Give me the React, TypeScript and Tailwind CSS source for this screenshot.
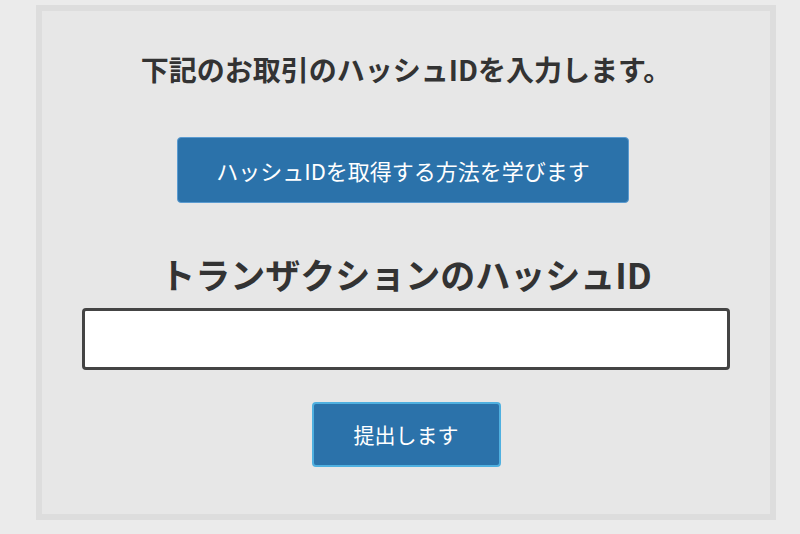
import React from 'react';

const jp = { fontFamily: '"Noto Sans CJK JP", "Noto Sans", sans-serif' };

function App() {
  return (
    <div className="min-h-screen w-[800px] h-[534px] bg-[#ebebeb] pt-[5px] pl-[36px]" style={jp}>
      <div className="w-[740px] h-[515px] border-[6px] border-[#dddddd] bg-[#e7e7e7] flex flex-col items-center">
        {/* Intro line */}
        <p className="mt-[40px] text-[28px] leading-[36px] font-bold text-[#333333]">
          下記のお取引のハッシュIDを入力します。
        </p>

        <button className="mt-[50px] mr-[6px] w-[452px] h-[66px] rounded-[4px] bg-[#2b72aa] border border-[#5b9bd0] text-white text-[22px]">
          ハッシュIDを取得する方法を学びます
        </button>

        {/* Field */}
        <h2 className="mt-[49px] text-[35px] leading-[44px] font-bold text-[#333333]">
          トランザクションのハッシュID
        </h2>
        <input
          type="text"
          className="mt-[12px] w-[648px] h-[62px] rounded-[4px] border-[3px] border-[#444444] bg-white outline-none"
        />

        <button className="mt-[32px] w-[189px] h-[65px] rounded-[4px] bg-[#2b72aa] border-2 border-[#4fb0e0] text-white text-[21px]">
          提出します
        </button>
      </div>
    </div>
  );
}

export default App;
